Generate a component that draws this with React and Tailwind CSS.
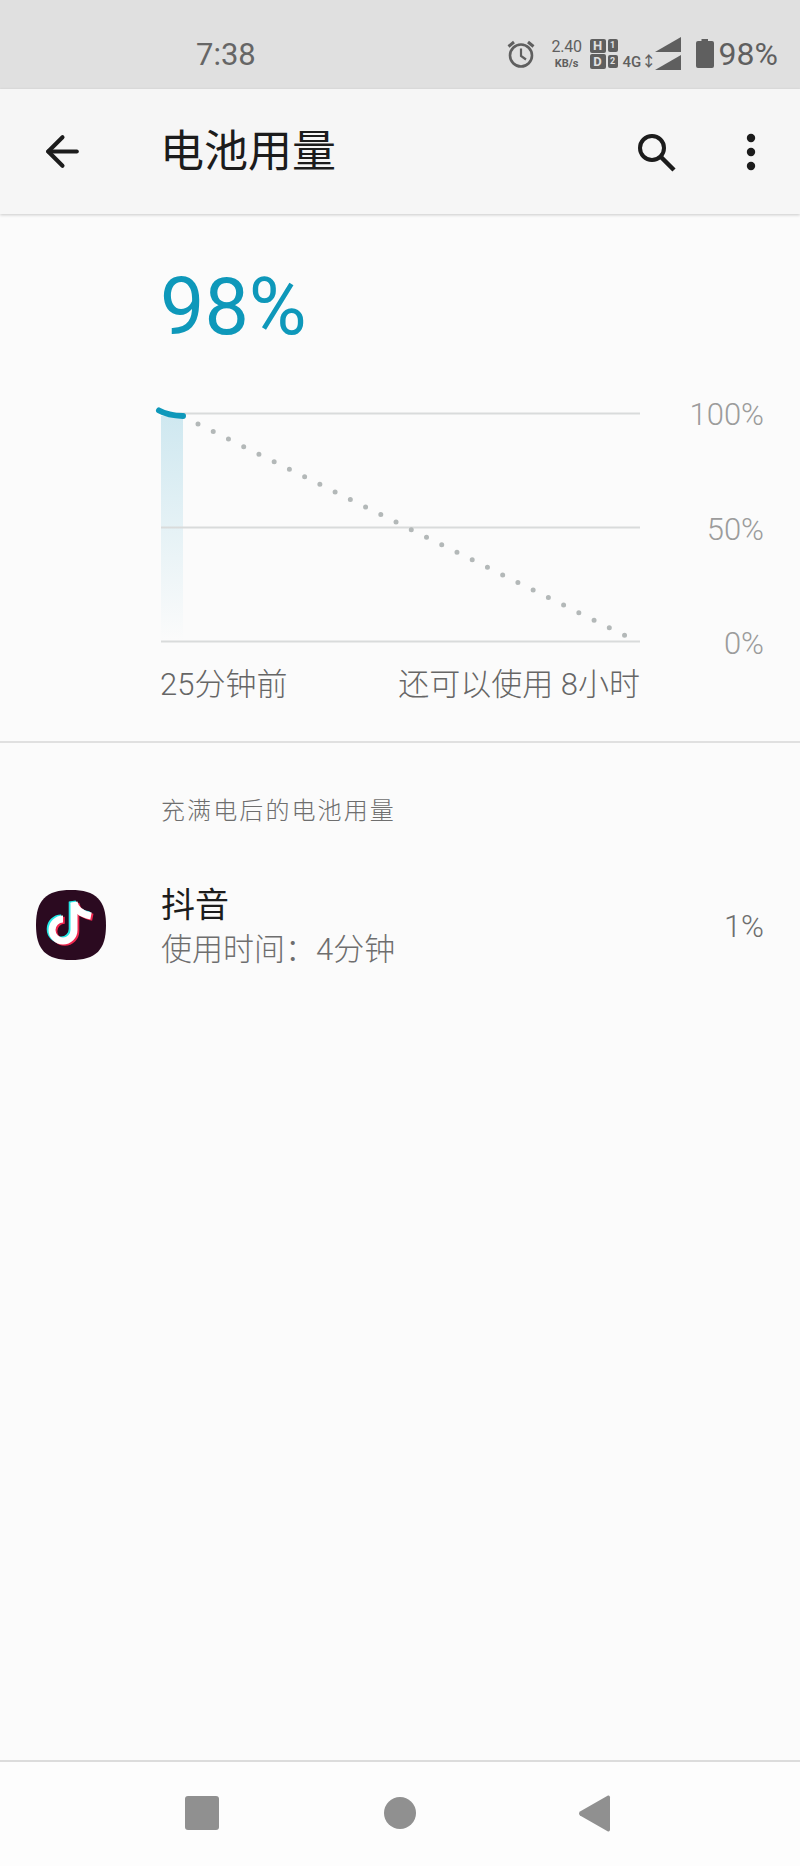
import { ArrowLeft } from "lucide-react";

const fontStack = "font-['Roboto','Noto_Sans_CJK_SC',sans-serif]";

function Alarm() {
  return (
    <svg width="30" height="30" viewBox="0 0 30 30" fill="none" stroke="#5f5f5f" strokeWidth="2.6">
      <circle cx="15" cy="16.5" r="11" />
      <path d="M15 9.5V17l5 3.5" strokeWidth="2.2" />
      <path d="M2.5 7.5 8 3M27.5 7.5 22 3" strokeWidth="3" />
    </svg>
  );
}

function SimBlocks() {
  const box = "flex items-center justify-center rounded-[2px] bg-[#5f5f5f] text-[#e0e0e0] font-bold leading-none";
  return (
    <div className="grid grid-cols-[16px_10px] grid-rows-2 gap-x-[2px] gap-y-[1px] w-[28px] h-[30px]">
      <div className={`${box} text-[13px]`}>H</div>
      <div className={`${box} text-[9px] h-[13px]`}>1</div>
      <div className={`${box} text-[13px]`}>D</div>
      <div className={`${box} text-[9px] h-[13px] mt-[1px]`}>2</div>
    </div>
  );
}

function Signal() {
  return (
    <svg width="27" height="33" viewBox="0 0 27 33" fill="#5f5f5f">
      <path d="M0 15 26 0V15Z" />
      <path d="M0 33 26 18V33Z" />
    </svg>
  );
}

function Battery() {
  return (
    <svg width="18" height="29" viewBox="0 0 18 29" fill="#5f5f5f">
      <path d="M5.5 0H12V2H16Q18 2 18 4V27Q18 29 16 29H2Q0 29 0 27V4Q0 2 2 2H5.5Z" />
    </svg>
  );
}

function StatusBar() {
  return (
    <div className="h-[89px] shrink-0 bg-[#e0e0e0] flex items-center text-[#5f5f5f] pr-[22px] pt-[18px]">
      <span className="ml-[196px] text-[31px] leading-none text-[#666666] mt-[1px]">7:38</span>
      <div className="ml-auto flex items-center">
        <Alarm />
        <div className="ml-[15px] flex flex-col items-center w-[32px] leading-none">
          <span className="text-[16px] tracking-[-0.3px]">2.40</span>
          <span className="text-[11px] font-bold mt-[3px]">KB/s</span>
        </div>
        <div className="ml-[7px]">
          <SimBlocks />
        </div>
        <span className="ml-[5px] mt-[18px] text-[15px] font-medium leading-none w-[29px]">4G↕</span>
        <div className="ml-[3px] mt-[-1px]">
          <Signal />
        </div>
        <div className="ml-[14px]">
          <Battery />
        </div>
        <span className="ml-[5px] text-[32px] leading-none">98%</span>
      </div>
    </div>
  );
}

function Toolbar() {
  return (
    <div className="h-[125px] shrink-0 bg-[#f6f6f6] flex items-center shadow-[0_1px_3px_rgba(0,0,0,0.2)] relative">
      <ArrowLeft className="ml-[38px]" size={49} strokeWidth={2} color="#1c1c1c" />
      <h1 className="ml-[73px] text-[44px] leading-none text-[#1c1c1c] mt-[1px]">电池用量</h1>
      <svg className="ml-auto" width="40" height="40" viewBox="0 0 40 40" fill="none" stroke="#1c1c1c">
        <circle cx="16" cy="16" r="12" strokeWidth="4" />
        <path d="M25 25 38 38" strokeWidth="4.5" />
      </svg>
      <svg className="ml-[70px] mr-[44px]" width="10" height="38" viewBox="0 0 10 38" fill="#1c1c1c">
        <circle cx="5" cy="5" r="4.2" />
        <circle cx="5" cy="19" r="4.2" />
        <circle cx="5" cy="33" r="4.2" />
      </svg>
    </div>
  );
}

function BatteryChart() {
  // svg origin sits at page x=160, y=398
  return (
    <svg width="482" height="263" viewBox="0 0 482 263" fill="none" className="overflow-visible">
      <defs>
        <linearGradient id="fade" x1="0" y1="0" x2="0" y2="1">
          <stop offset="0" stopColor="#cfe8f0" />
          <stop offset="1" stopColor="#fbfbfb" />
        </linearGradient>
      </defs>
      <rect x="1" y="18" width="22" height="224" fill="url(#fade)" />
      <path d="M1 15.5H480M1 129.5H480M1 243.5H480" stroke="#d9dbdb" strokeWidth="2" />
      <path
        d="M38 26 466 238"
        stroke="#b3b8b8"
        strokeWidth="5"
        strokeLinecap="round"
        strokeDasharray="0 17"
      />
      <path d="M-1 12.5Q8 17.5 23 18" stroke="#0e98ba" strokeWidth="6" strokeLinecap="round" />
    </svg>
  );
}

function DouyinIcon() {
  const note = "M38 13V40a11 11 0 1 1-11-11";
  const flag = "M38 12c1 7 7 12 17 14";
  const strokes = (color, dx, dy) => (
    <g stroke={color} fill="none" transform={`translate(${dx} ${dy})`}>
      <path d={note} strokeWidth="7" />
      <path d={flag} strokeWidth="7" />
    </g>
  );
  return (
    <svg width="70" height="70" viewBox="0 0 70 70" className="shrink-0 -mt-[6px]">
      <path d="M35 0C60 0 70 10 70 35C70 60 60 70 35 70C10 70 0 60 0 35C0 10 10 0 35 0Z" fill="#2b0a20" />
      {strokes("#25e8e6", -1.8, -1)}
      {strokes("#f0284f", 1.8, 1.2)}
      {strokes("#ffffff", 0, 0)}
    </svg>
  );
}

function NavBar() {
  return (
    <div className="h-[106px] shrink-0 bg-[#fdfdfd] border-t-2 border-[#dcdcdc] flex items-center pb-[2px]">
      <div className="ml-[185px] w-[34px] h-[34px] rounded-[3px] bg-[#909090]" />
      <div className="ml-[165px] w-[32px] h-[32px] rounded-full bg-[#909090]" />
      <svg className="ml-[162px]" width="33" height="37" viewBox="0 0 33 37" fill="#909090">
        <path d="M30 0.5Q32 0 32 2.5V34.5Q32 37 30 36.5L2 20.5Q0 18.5 2 16.5Z" />
      </svg>
    </div>
  );
}

export default function App() {
  return (
    <div className={`${fontStack} w-[800px] h-[1866px] flex flex-col bg-[#fbfbfb] overflow-hidden`}>
      <StatusBar />
      <Toolbar />

      <main className="flex-1 min-h-0">
        <section className="border-b-2 border-[#e0e0e0] pb-[38px]">
          <div className="pl-[160px] pt-[53px] text-[79px] leading-[80px] text-[#0e98ba]">98%</div>
          <div className="mt-[51px] flex">
            <div className="ml-[160px]">
              <BatteryChart />
            </div>
            <div className="ml-auto mr-[36px] h-[263px] flex flex-col justify-between items-end text-[31px] leading-[34px] text-[#9c9c9c] font-light">
              <span>100%</span>
              <span>50%</span>
              <span>0%</span>
            </div>
          </div>
          <div className="ml-[160px] w-[480px] mt-[6px] flex justify-between text-[31px] leading-[36px] text-[#666666] font-light">
            <span>25分钟前</span>
            <span>还可以使用 8小时</span>
          </div>
        </section>

        <p className="pl-[161px] pt-[52px] text-[24px] leading-[32px] tracking-[2.1px] text-[#6e6e6e] font-light">充满电后的电池用量</p>

        <div className="mt-[58px] flex items-center pl-[36px] pr-[36px]">
          <DouyinIcon />
          <div className="ml-[55px] flex-1">
            <div className="text-[34px] leading-[40px] text-[#1c1c1c]">抖音</div>
            <div className="mt-[5px] text-[31px] leading-[40px] text-[#6e6e6e] font-light">使用时间：4分钟</div>
          </div>
          <span className="text-[31px] leading-none text-[#6e6e6e] font-light -mt-[2px]">1%</span>
        </div>
      </main>

      <NavBar />
    </div>
  );
}
